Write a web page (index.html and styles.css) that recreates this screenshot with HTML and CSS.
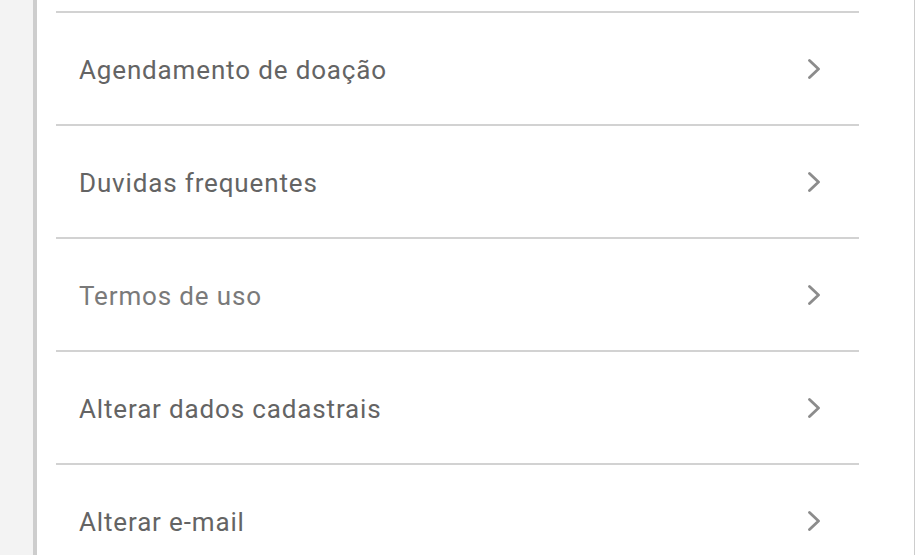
FILE: index.html
```html
<!DOCTYPE html>
<html lang="pt">
<head>
<meta charset="utf-8">
<title>Menu</title>
<link rel="stylesheet" href="styles.css">
</head>
<body>
<div class="card">
  <ul class="menu">
    <li class="item"><span class="label">Agendamento de doação</span><svg class="chev" viewBox="0 0 12 20" width="12" height="20"><polyline points="1.5,1.5 10.5,10 1.5,18.5"/></svg></li>
    <li class="item"><span class="label">Duvidas frequentes</span><svg class="chev" viewBox="0 0 12 20" width="12" height="20"><polyline points="1.5,1.5 10.5,10 1.5,18.5"/></svg></li>
    <li class="item"><span class="label light">Termos de uso</span><svg class="chev" viewBox="0 0 12 20" width="12" height="20"><polyline points="1.5,1.5 10.5,10 1.5,18.5"/></svg></li>
    <li class="item"><span class="label">Alterar dados cadastrais</span><svg class="chev" viewBox="0 0 12 20" width="12" height="20"><polyline points="1.5,1.5 10.5,10 1.5,18.5"/></svg></li>
    <li class="item"><span class="label">Alterar e-mail</span><svg class="chev" viewBox="0 0 12 20" width="12" height="20"><polyline points="1.5,1.5 10.5,10 1.5,18.5"/></svg></li>
  </ul>
</div>
</body>
</html>
```
FILE: styles.css
```css
html, body {
  margin: 0;
  padding: 0;
  height: 100%;
  overflow: hidden;
  background: #f3f3f3;
}
body {
  font-family: Roboto, "Noto Sans", "Liberation Sans", sans-serif;
}
.card {
  margin-left: 33px;
  width: 840px;
  min-height: 100%;
  background: #ffffff;
  border-left: 4px solid #cdcdcd;
  border-right: 5px solid #cdcdcd;
  padding: 11px 18px 0 19px;
  box-sizing: content-box;
}
.menu {
  list-style: none;
  margin: 0;
  padding: 0;
  width: 803px;
}
.item {
  display: flex;
  align-items: center;
  justify-content: space-between;
  height: 111px;
  border-top: 2px solid #d2d2d2;
  padding: 0 39px 0 23px;
}
.label {
  font-size: 26px;
  color: #646464;
  letter-spacing: 0.85px;
  position: relative;
  top: 1px;
}
.label.light {
  color: #7a7a7a;
}
.chev {
  display: block;
  fill: none;
  stroke: #8c8c8c;
  stroke-width: 2.8;
  stroke-linecap: round;
  stroke-linejoin: round;
}
```
